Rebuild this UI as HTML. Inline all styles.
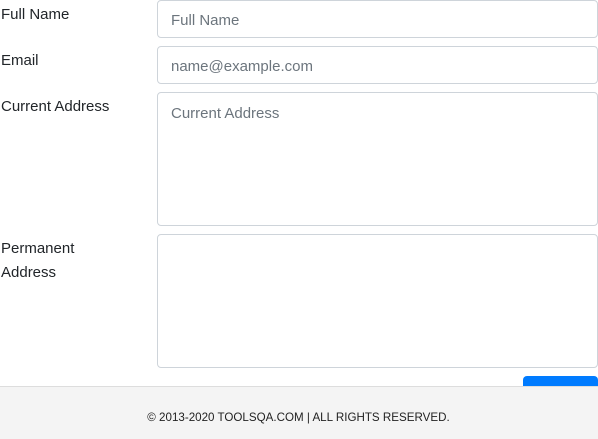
<!DOCTYPE html>
<html><head><style>
body{margin:0;width:598px;height:438px;overflow:hidden;background:#fff;font-family:"Liberation Sans",sans-serif;position:relative}
.l{position:absolute;left:1px;font-size:15px;color:#212529;line-height:24px}
.i{position:absolute;left:157px;width:441px;border:1px solid #ced4da;border-radius:4px;background:#fff;box-sizing:border-box;font-size:15px;color:#6c757d;padding-left:13px}
.ft{position:absolute;left:0;top:386px;width:598px;height:52px;background:#f4f4f4;border-top:1px solid #ddd}
</style></head><body>
<div class="l" style="top:3px">Full Name</div>
<div class="i" style="top:0;height:38px;line-height:40px">Full Name</div>
<div class="l" style="top:49px">Email</div>
<div class="i" style="top:46px;height:38px;line-height:40px">name@example.com</div>
<div class="l" style="top:95px">Current Address</div>
<div class="i" style="top:92px;height:134px;padding-top:11px;line-height:20px">Current Address</div>
<div class="l" style="top:237px">Permanent<br>Address</div>
<div class="i" style="top:234px;height:134px"></div>
<div style="position:absolute;left:523px;top:376px;width:75px;height:12px;background:#007bff;border-radius:4px 4px 0 0"></div>
<div class="ft"><div style="text-align:center;margin-top:24px;font-size:11.6px;color:#222;margin-left:-1px">© 2013-2020 TOOLSQA.COM | ALL RIGHTS RESERVED.</div></div>
</body></html>
